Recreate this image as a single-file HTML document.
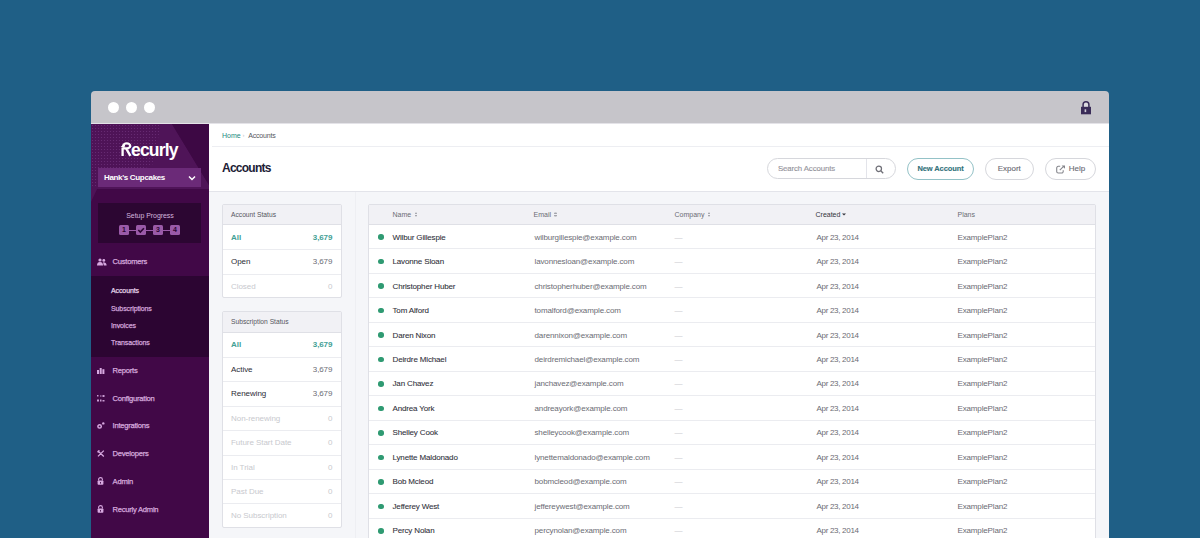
<!DOCTYPE html>
<html><head><meta charset="utf-8">
<style>
*{margin:0;padding:0;box-sizing:border-box}
html,body{width:1200px;height:538px;overflow:hidden;background:#1f5f86;font-family:"Liberation Sans",sans-serif}
#root{position:absolute;left:0;top:0;width:1200px;height:538px;overflow:hidden}
.t{position:absolute;white-space:nowrap;line-height:1;transform:translateY(-50%)}
i{font-style:normal}
#win{position:absolute;left:91px;top:91px;width:1018px;height:460px;border-radius:4px 4px 0 0;overflow:hidden;background:#f4f5f8}
#titlebar{position:absolute;left:91px;top:91px;width:1018px;height:33px;background:#c6c5ca;border-radius:4px 4px 0 0}
.dot{position:absolute;top:11px;width:11px;height:11px;border-radius:50%;background:#fff}
#side{position:absolute;left:91px;top:124px;width:118px;height:414px;background:#410847;overflow:hidden}
#hdr{position:absolute;left:209px;top:124px;width:900px;height:68px;background:#fff;border-bottom:1px solid #e3e4ea}
#content{position:absolute;left:209px;top:192px;width:900px;height:346px;background:#f5f6f9}
#vdiv{position:absolute;left:355px;top:192px;width:1px;height:346px;background:#eeeff3}
.panel{position:absolute;left:222px;width:120px;background:#fff;border:1px solid #dfe0e6;border-radius:2px;overflow:hidden}
.ph{position:absolute;left:0;top:0;width:100%;background:#f1f1f5;border-bottom:1px solid #dfe0e6}
.ph .t{font-size:6.7px;color:#55565e}
.pr{position:absolute;left:0;width:100%}
.pr .l{left:8px;font-size:8px;letter-spacing:-0.05px}
.pr .r{right:8.7px;font-size:8px;letter-spacing:-0.1px}
.act .t{color:#42a094;font-weight:bold;margin-top:0.5px}
.on .t{color:#2c2c36}
.on .r{color:#6b6c74}
.off .t{color:#c8c9ce}
#tbl{position:absolute;left:368px;top:204px;width:728px;height:340px;background:#fff;border:1px solid #dfe0e6;border-radius:2px}
.th{position:absolute;left:0;top:0;width:100%;height:20px;background:#f1f1f5;border-bottom:1px solid #dfe0e6}
.th .t{top:9.2px;font-size:7px;color:#6b6c74}
.th .dk{color:#33343c}
.tr{position:absolute;left:0;width:100%;height:24.48px;border-bottom:1px solid #ebecf0}
.tr .t{top:12.6px;font-size:8px;letter-spacing:-0.15px}
.nm{color:#30303a;-webkit-text-stroke:0.08px #30303a}
.em{color:#6b6c74}
.dash{color:#c8c9ce}
.gd{position:absolute;left:9px;top:9.3px;width:5.6px;height:5.6px;border-radius:50%;background:#2f9a72}
.so{display:inline-block;width:2.5px;height:4.5px;margin-left:1.5px;vertical-align:-0.3px;background:linear-gradient(#a3a4ab 0 40%,transparent 40% 60%,#a3a4ab 60% 100%);border-radius:1px}
.dn{display:inline-block;width:0;height:0;border-left:2px solid transparent;border-right:2px solid transparent;border-top:2px solid #33343c;vertical-align:middle}
.nav{position:absolute;left:91px;width:118px;height:28px}
.nav .t{left:21.6px;top:14.4px;font-size:7.6px;letter-spacing:-0.25px;color:#d6aade;-webkit-text-stroke:0.25px #d6aade}
.sub .t{left:20px;font-size:7px;letter-spacing:-0.1px;color:#cc9fd6}
.btn{position:absolute;top:158px;height:21.5px;border:1px solid #d6d7dc;border-radius:11px;background:#fff}
.btn .t{top:10px;font-size:8px;color:#6b6c74;-webkit-text-stroke:0.12px #6b6c74;left:50%;transform:translate(-50%,-50%)}

.stp{position:absolute;top:101.3px;width:9.7px;height:9.7px;background:#9a5aa8;border-radius:1.5px;font-size:7px;font-weight:bold;color:#2d0533;text-align:center;line-height:9.7px}
.ico{position:absolute;left:6px}

</style></head><body>
<div id="root">
<div id="titlebar"><div style="position:absolute;left:0;bottom:0;width:100%;height:1px;background:#e4e3e8"></div>
  <div class="dot" style="left:17px"></div>
  <div class="dot" style="left:35px"></div>
  <div class="dot" style="left:53px"></div>
  <svg style="position:absolute;left:989px;top:9px" width="12" height="15" viewBox="0 0 12 15"><path d="M3.1 7V4.6a2.9 2.9 0 0 1 5.8 0V7" fill="#dcdbe0" stroke="#3a2c58" stroke-width="1.5"/><rect x="1" y="6.8" width="10" height="7.5" fill="#3a2c58"/><rect x="4.6" y="9.3" width="1.6" height="2.8" fill="#cfcdd6"/></svg>
</div>
<div id="side">
  <svg style="position:absolute;left:0;top:0" width="118" height="414" viewBox="0 0 118 414">
    <defs><pattern id="dp" width="3" height="3" patternUnits="userSpaceOnUse"><rect width="3" height="3" fill="#4e1357"/><circle cx="1.5" cy="1.5" r="0.6" fill="#6a2e76"/></pattern></defs><polygon points="0,0 81,0 118,61 118,65 0,65" fill="#4f1458"/><polygon points="0,0 70,0 62,40 20,62 0,62" fill="url(#dp)"/><polygon points="0,63 7,63 0,78" fill="#4e1357"/>
    <polygon points="81,0 118,0 118,61" fill="#3d0844"/>
  </svg>
  <svg style="position:absolute;left:27px;top:14px" width="16" height="20" viewBox="0 0 16 20"><path d="M5.2 7.9A3.5 2.5 0 1 1 8.7 10.4H4.6M4.6 9.4V17.9M8.1 10.4L12.4 17.9" fill="none" stroke="#fff" stroke-width="2.3"/><path d="M2.5 8.4L7.2 6.5L6.4 10.1z" fill="#fff"/></svg>
  <div class="t" style="left:40px;top:26.5px;font-size:17.6px;font-weight:bold;color:#fff;letter-spacing:-0.85px">ecurly</div>
  <div style="position:absolute;left:7px;top:44px;width:103px;height:19px;background:#6b2a78"></div>
  <div class="t" style="left:13px;top:53.5px;font-size:8px;font-weight:bold;color:#fff;letter-spacing:-0.33px">Hank's Cupcakes</div>
  <svg style="position:absolute;left:97px;top:51px" width="8" height="6" viewBox="0 0 8 6"><path d="M1 1.5l3 3 3-3" fill="none" stroke="#fff" stroke-width="1.5"/></svg>
  <div style="position:absolute;left:7px;top:79px;width:103px;height:40px;background:#2c0632"></div>
  <div class="t" style="left:0;width:118px;text-align:center;top:91px;font-size:7px;letter-spacing:-0.05px;color:#d4b4df">Setup Progress</div>
  <div style="position:absolute;left:30px;top:105.8px;width:56px;height:1px;background:#9a5aa8"></div>
  <div class="stp" style="left:28px">1</div>
  <div class="stp" style="left:45px"><svg width="10" height="10" viewBox="0 0 10 10" style="position:absolute;left:0;top:0"><path d="M2.3 5l2 2 3.6-3.8" fill="none" stroke="#2d0533" stroke-width="1.6"/></svg></div>
  <div class="stp" style="left:62.2px">3</div>
  <div class="stp" style="left:79.1px">4</div>
  <div style="position:absolute;left:0;top:152px;width:118px;height:80.5px;background:#2c0532"></div>
  <svg class="ico" style="top:134px" width="10" height="8" viewBox="0 0 10 8"><circle cx="3" cy="2" r="1.6" fill="#d7a8e0"/><path d="M0 7.5c0-2.5 1.2-3.6 3-3.6s3 1.1 3 3.6z" fill="#d7a8e0"/><circle cx="6.8" cy="2.4" r="1.4" fill="#d7a8e0"/><path d="M6 4.3c2.2 0 3.6 1 3.6 3.2H6.8z" fill="#d7a8e0"/></svg>
  <svg class="ico" style="top:243.5px" width="8" height="6" viewBox="0 0 8 6"><rect x="0" y="2" width="2" height="4" fill="#d7a8e0"/><rect x="2.7" y="0" width="2" height="6" fill="#d7a8e0"/><rect x="5.4" y="1.2" width="2" height="4.8" fill="#d7a8e0"/></svg>
  <svg class="ico" style="top:271px" width="8" height="7" viewBox="0 0 8 7"><rect x="0" y="0" width="1.5" height="1.5" fill="#c99bd3"/><rect x="3" y="0.5" width="1.5" height="1" fill="#c99bd3"/><rect x="5.5" y="0" width="2" height="2" fill="#c99bd3"/><rect x="0" y="4.5" width="2" height="2" fill="#c99bd3"/><rect x="3" y="4.5" width="1.5" height="2" fill="#c99bd3"/><rect x="5.5" y="5" width="2" height="1.5" fill="#c99bd3"/></svg>
  <svg class="ico" style="top:298px" width="8" height="7" viewBox="0 0 8 7"><circle cx="2.6" cy="4.4" r="1.7" fill="none" stroke="#d7a8e0" stroke-width="1.5"/><circle cx="6.3" cy="1.4" r="1.2" fill="#d7a8e0"/></svg>
  <svg class="ico" style="top:325.5px" width="8" height="7" viewBox="0 0 8 7"><path d="M0.8 0.8l6 5.6M6.8 0.6L1 6.4M0.5 2.2L2.4 0.4" fill="none" stroke="#d7a8e0" stroke-width="1.3"/></svg>
  <svg class="ico" style="top:353px" width="7" height="8" viewBox="0 0 7 8"><path d="M1.6 3.6V2.5a1.9 1.9 0 0 1 3.8 0v1.1" fill="none" stroke="#d7a8e0" stroke-width="1.1"/><rect x="0.6" y="3.5" width="5.8" height="4.3" rx="0.8" fill="#d7a8e0"/><rect x="3.1" y="5" width="0.9" height="1.6" fill="#410847"/></svg>
  <svg class="ico" style="top:381px" width="7" height="8" viewBox="0 0 7 8"><path d="M1.6 3.6V2.5a1.9 1.9 0 0 1 3.8 0v1.1" fill="none" stroke="#d7a8e0" stroke-width="1.1"/><rect x="0.6" y="3.5" width="5.8" height="4.3" rx="0.8" fill="#d7a8e0"/><rect x="3.1" y="5" width="0.9" height="1.6" fill="#410847"/></svg>
</div>
<div class="nav" style="top:248px"><span class="t">Customers</span></div>
<div class="nav sub" style="top:290px;height:0"><span class="t" style="top:0;color:#fff">Accounts</span></div>
<div class="nav sub" style="top:307.5px;height:0"><span class="t" style="top:0">Subscriptions</span></div>
<div class="nav sub" style="top:325px;height:0"><span class="t" style="top:0">Invoices</span></div>
<div class="nav sub" style="top:342.3px;height:0"><span class="t" style="top:0">Transactions</span></div>
<div class="nav" style="top:356.5px"><span class="t">Reports</span></div>
<div class="nav" style="top:384.3px"><span class="t">Configuration</span></div>
<div class="nav" style="top:412px"><span class="t">Integrations</span></div>
<div class="nav" style="top:439.5px"><span class="t">Developers</span></div>
<div class="nav" style="top:467.8px"><span class="t">Admin</span></div>
<div class="nav" style="top:495.7px"><span class="t">Recurly Admin</span></div>
<div id="hdr">
  <div class="t" style="left:13px;top:11.2px;font-size:7px;color:#238a80">Home</div>
  <div class="t" style="left:33.5px;top:11.2px;font-size:6px;color:#c5c6cc">&rsaquo;</div>
  <div class="t" style="left:39.3px;top:11.2px;font-size:7px;letter-spacing:-0.2px;color:#55565e">Accounts</div>
  <div style="position:absolute;left:2.5px;top:22px;width:897.5px;height:1px;background:#edeef2"></div>
  <div class="t" style="left:13px;top:44.3px;font-size:12px;font-weight:bold;letter-spacing:-0.75px;color:#211c36">Accounts</div>
</div>
<div id="content"></div>
<div id="vdiv"></div>
<div class="btn" style="left:767px;width:129px;height:21px"><span class="t" style="left:10px;transform:translateY(-50%);color:#9fa0a8;font-size:7.8px;letter-spacing:-0.1px">Search Accounts</span><div style="position:absolute;left:98px;top:0;width:1px;height:100%;background:#e3e4ea"></div>
<svg style="position:absolute;left:107px;top:5.5px" width="9" height="9" viewBox="0 0 9 9"><circle cx="3.8" cy="3.8" r="2.7" fill="none" stroke="#707078" stroke-width="1.25"/><path d="M6 6l2.2 2.2" stroke="#707078" stroke-width="1.4"/></svg></div>
<div class="btn" style="left:907px;width:67px;border-color:#94c2c7"><span class="t" style="color:#1f737c;font-weight:bold;font-size:7.5px;letter-spacing:-0.1px">New Account</span></div>
<div class="btn" style="left:984.5px;width:49.5px"><span class="t">Export</span></div>
<div class="btn" style="left:1045px;width:51px"><span class="t" style="left:31px">Help</span>
<svg style="position:absolute;left:9.6px;top:5.7px" width="10" height="9" viewBox="0 0 10 9"><path d="M4.2 1.3H2.3a1.6 1.6 0 0 0-1.6 1.6V6.4a1.6 1.6 0 0 0 1.6 1.6H5.6a1.6 1.6 0 0 0 1.6-1.6V5.3" fill="none" stroke="#85868c" stroke-width="1.1"/><path d="M3.8 5.2L7.6 1.4" stroke="#85868c" stroke-width="1.1"/><path d="M5.6 0.4H9V3.8z" fill="#85868c"/></svg></div>
<div class="panel" style="top:204px;height:94.00px"><div class="ph" style="height:20px"><span class="t" style="left:8px;top:9.50px">Account Status</span></div><div class="pr act" style="top:20.00px;height:24.25px;"><span class="t l" style="top:12.12px">All</span><span class="t r" style="top:12.12px">3,679</span></div><div class="pr on" style="top:44.25px;height:24.25px;border-top:1px solid #ebecf0;"><span class="t l" style="top:12.12px">Open</span><span class="t r" style="top:12.12px">3,679</span></div><div class="pr off" style="top:68.50px;height:24.25px;border-top:1px solid #ebecf0;"><span class="t l" style="top:12.12px">Closed</span><span class="t r" style="top:12.12px">0</span></div></div>
<div class="panel" style="top:311px;height:216.80px"><div class="ph" style="height:20.5px"><span class="t" style="left:8px;top:9.75px">Subscription Status</span></div><div class="pr act" style="top:20.50px;height:24.4px;"><span class="t l" style="top:12.20px">All</span><span class="t r" style="top:12.20px">3,679</span></div><div class="pr on" style="top:44.90px;height:24.4px;border-top:1px solid #ebecf0;"><span class="t l" style="top:12.20px">Active</span><span class="t r" style="top:12.20px">3,679</span></div><div class="pr on" style="top:69.30px;height:24.4px;border-top:1px solid #ebecf0;"><span class="t l" style="top:12.20px">Renewing</span><span class="t r" style="top:12.20px">3,679</span></div><div class="pr off" style="top:93.70px;height:24.4px;border-top:1px solid #ebecf0;"><span class="t l" style="top:12.20px">Non-renewing</span><span class="t r" style="top:12.20px">0</span></div><div class="pr off" style="top:118.10px;height:24.4px;border-top:1px solid #ebecf0;"><span class="t l" style="top:12.20px">Future Start Date</span><span class="t r" style="top:12.20px">0</span></div><div class="pr off" style="top:142.50px;height:24.4px;border-top:1px solid #ebecf0;"><span class="t l" style="top:12.20px">In Trial</span><span class="t r" style="top:12.20px">0</span></div><div class="pr off" style="top:166.90px;height:24.4px;border-top:1px solid #ebecf0;"><span class="t l" style="top:12.20px">Past Due</span><span class="t r" style="top:12.20px">0</span></div><div class="pr off" style="top:191.30px;height:24.4px;border-top:1px solid #ebecf0;"><span class="t l" style="top:12.20px">No Subscription</span><span class="t r" style="top:12.20px">0</span></div></div>
<div id="tbl"><div class="th"><span class="t" style="left:23.5px">Name <i class="so"></i></span><span class="t" style="left:164.5px">Email <i class="so"></i></span><span class="t" style="left:305.5px">Company <i class="so"></i></span><span class="t dk" style="left:446.5px">Created <i class="dn"></i></span><span class="t" style="left:588.5px">Plans</span></div><div class="tr" style="top:20.00px"><i class="gd"></i><span class="t nm" style="left:23.5px">Wilbur Gillespie</span><span class="t em" style="left:165.5px;letter-spacing:-0.13px">wilburgillespie@example.com</span><span class="t dash" style="left:305.5px">&mdash;</span><span class="t em" style="left:447.5px;letter-spacing:-0.3px">Apr 23, 2014</span><span class="t em" style="left:588.5px">ExamplePlan2</span></div><div class="tr" style="top:44.48px"><i class="gd"></i><span class="t nm" style="left:23.5px">Lavonne Sloan</span><span class="t em" style="left:165.5px;letter-spacing:-0.13px">lavonnesloan@example.com</span><span class="t dash" style="left:305.5px">&mdash;</span><span class="t em" style="left:447.5px;letter-spacing:-0.3px">Apr 23, 2014</span><span class="t em" style="left:588.5px">ExamplePlan2</span></div><div class="tr" style="top:68.96px"><i class="gd"></i><span class="t nm" style="left:23.5px">Christopher Huber</span><span class="t em" style="left:165.5px;letter-spacing:-0.13px">christopherhuber@example.com</span><span class="t dash" style="left:305.5px">&mdash;</span><span class="t em" style="left:447.5px;letter-spacing:-0.3px">Apr 23, 2014</span><span class="t em" style="left:588.5px">ExamplePlan2</span></div><div class="tr" style="top:93.44px"><i class="gd"></i><span class="t nm" style="left:23.5px">Tom Alford</span><span class="t em" style="left:165.5px;letter-spacing:-0.13px">tomalford@example.com</span><span class="t dash" style="left:305.5px">&mdash;</span><span class="t em" style="left:447.5px;letter-spacing:-0.3px">Apr 23, 2014</span><span class="t em" style="left:588.5px">ExamplePlan2</span></div><div class="tr" style="top:117.92px"><i class="gd"></i><span class="t nm" style="left:23.5px">Daren Nixon</span><span class="t em" style="left:165.5px;letter-spacing:-0.13px">darennixon@example.com</span><span class="t dash" style="left:305.5px">&mdash;</span><span class="t em" style="left:447.5px;letter-spacing:-0.3px">Apr 23, 2014</span><span class="t em" style="left:588.5px">ExamplePlan2</span></div><div class="tr" style="top:142.40px"><i class="gd"></i><span class="t nm" style="left:23.5px">Deirdre Michael</span><span class="t em" style="left:165.5px;letter-spacing:-0.13px">deirdremichael@example.com</span><span class="t dash" style="left:305.5px">&mdash;</span><span class="t em" style="left:447.5px;letter-spacing:-0.3px">Apr 23, 2014</span><span class="t em" style="left:588.5px">ExamplePlan2</span></div><div class="tr" style="top:166.88px"><i class="gd"></i><span class="t nm" style="left:23.5px">Jan Chavez</span><span class="t em" style="left:165.5px;letter-spacing:-0.13px">janchavez@example.com</span><span class="t dash" style="left:305.5px">&mdash;</span><span class="t em" style="left:447.5px;letter-spacing:-0.3px">Apr 23, 2014</span><span class="t em" style="left:588.5px">ExamplePlan2</span></div><div class="tr" style="top:191.36px"><i class="gd"></i><span class="t nm" style="left:23.5px">Andrea York</span><span class="t em" style="left:165.5px;letter-spacing:-0.13px">andreayork@example.com</span><span class="t dash" style="left:305.5px">&mdash;</span><span class="t em" style="left:447.5px;letter-spacing:-0.3px">Apr 23, 2014</span><span class="t em" style="left:588.5px">ExamplePlan2</span></div><div class="tr" style="top:215.84px"><i class="gd"></i><span class="t nm" style="left:23.5px">Shelley Cook</span><span class="t em" style="left:165.5px;letter-spacing:-0.13px">shelleycook@example.com</span><span class="t dash" style="left:305.5px">&mdash;</span><span class="t em" style="left:447.5px;letter-spacing:-0.3px">Apr 23, 2014</span><span class="t em" style="left:588.5px">ExamplePlan2</span></div><div class="tr" style="top:240.32px"><i class="gd"></i><span class="t nm" style="left:23.5px">Lynette Maldonado</span><span class="t em" style="left:165.5px;letter-spacing:-0.13px">lynettemaldonado@example.com</span><span class="t dash" style="left:305.5px">&mdash;</span><span class="t em" style="left:447.5px;letter-spacing:-0.3px">Apr 23, 2014</span><span class="t em" style="left:588.5px">ExamplePlan2</span></div><div class="tr" style="top:264.80px"><i class="gd"></i><span class="t nm" style="left:23.5px">Bob Mcleod</span><span class="t em" style="left:165.5px;letter-spacing:-0.13px">bobmcleod@example.com</span><span class="t dash" style="left:305.5px">&mdash;</span><span class="t em" style="left:447.5px;letter-spacing:-0.3px">Apr 23, 2014</span><span class="t em" style="left:588.5px">ExamplePlan2</span></div><div class="tr" style="top:289.28px"><i class="gd"></i><span class="t nm" style="left:23.5px">Jefferey West</span><span class="t em" style="left:165.5px;letter-spacing:-0.13px">jeffereywest@example.com</span><span class="t dash" style="left:305.5px">&mdash;</span><span class="t em" style="left:447.5px;letter-spacing:-0.3px">Apr 23, 2014</span><span class="t em" style="left:588.5px">ExamplePlan2</span></div><div class="tr" style="top:313.76px"><i class="gd"></i><span class="t nm" style="left:23.5px">Percy Nolan</span><span class="t em" style="left:165.5px;letter-spacing:-0.13px">percynolan@example.com</span><span class="t dash" style="left:305.5px">&mdash;</span><span class="t em" style="left:447.5px;letter-spacing:-0.3px">Apr 23, 2014</span><span class="t em" style="left:588.5px">ExamplePlan2</span></div></div>
</div></body></html>
